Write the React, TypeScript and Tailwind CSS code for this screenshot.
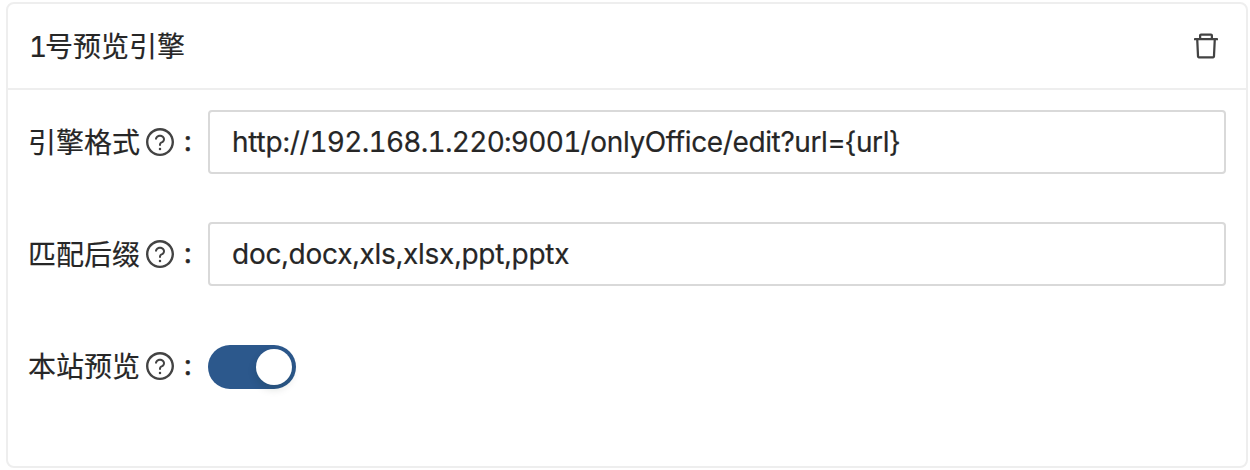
import { AiOutlineDelete, AiOutlineQuestionCircle } from 'react-icons/ai';
import type { ReactNode } from 'react';

function Field({ label, children }: { label: string; children: ReactNode }) {
  return (
    <div className="mb-12 flex h-16 items-center">
      <div className="flex w-[180px] shrink-0 items-center">
        <span className="w-[112px] pt-px [-webkit-text-stroke:0.2px_#262626]">{label}</span>
        <AiOutlineQuestionCircle className="ml-1 size-8 text-[#434343]" />
        <span className="ml-2 pb-0.5 [-webkit-text-stroke:0.5px_#262626]">:</span>
      </div>
      {children}
    </div>
  );
}

function TextBox({ children }: { children: ReactNode }) {
  return (
    <div
      role="textbox"
      contentEditable
      suppressContentEditableWarning
      className="h-16 min-w-0 flex-1 whitespace-nowrap rounded-[4px] border-2 border-[#d9d9d9] bg-white px-[22px] pt-2 tracking-[-0.23px] outline-none [-webkit-text-stroke:0.2px_#262626]"
    >
      {children}
    </div>
  );
}

export default function App() {
  return (
    <div className="h-[470px] bg-white pl-[6px] pr-[2px] pt-[2px] font-['Inter','Noto_Sans_CJK_SC',sans-serif] text-[28px] leading-[44px] tabular-nums text-[#262626]">
      <section className="h-[466px] rounded-[8px] border-2 border-[#eeeeee]">
        <header className="flex h-[86px] items-center justify-between border-b-2 border-[#eeeeee] pl-[21px] pr-6">
          <h2 className="pt-px [-webkit-text-stroke:0.2px_#262626]">
            <span className="tracking-[-2.2px]">1</span>号预览引擎
          </h2>
          <button aria-label="删除"><AiOutlineDelete className="size-8 text-[#434343]" /></button>
        </header>
        <div className="px-5 pt-5">
          <Field label="引擎格式">
            <TextBox>
              <span>http://</span>
              <span className="tracking-[-0.73px]">192.168.1.220:9001</span>
              <span className="tracking-[-0.37px]">/onlyOffice/edit?url={'{url}'}</span>
            </TextBox>
          </Field>
          <Field label="匹配后缀">
            <TextBox>doc,docx,xls,xlsx,ppt,pptx</TextBox>
          </Field>
          <Field label="本站预览">
            <button role="switch" aria-checked="true" className="mt-[2px] flex h-11 w-[88px] items-center justify-end rounded-full bg-[#2c588c] p-1">
              <span className="size-9 rounded-full bg-white shadow-[0_4px_8px_rgba(0,35,11,0.15)]" />
            </button>
          </Field>
        </div>
      </section>
    </div>
  );
}
